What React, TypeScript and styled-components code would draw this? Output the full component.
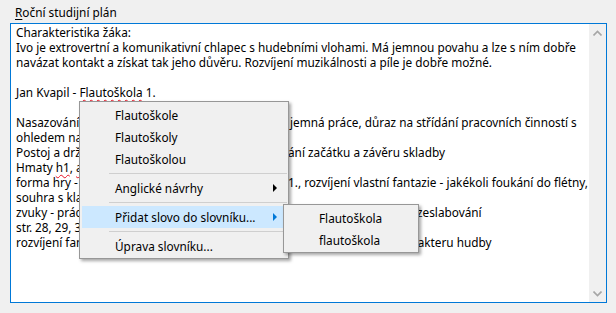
import React from "react";
import styled, { createGlobalStyle } from "styled-components";

const GlobalStyle = createGlobalStyle`
  html, body { margin: 0; padding: 0; }
  body {
    background: #f0f0f0;
    font-family: "Noto Sans", "Segoe UI", sans-serif;
    font-size: 11.8px;
    color: #000;
  }
`;

const Page = styled.div`
  position: relative;
  width: 616px;
  height: 313px;
  padding: 5px 0 0 10px;
  box-sizing: border-box;
`;

const Label = styled.div`
  line-height: 15px;
  padding-left: 5px;
  margin-bottom: 3px;
  white-space: nowrap;
`;

const AccessKey = styled.span`
  text-decoration: underline;
  text-underline-offset: 2px;
`;

const Field = styled.div`
  display: flex;
  width: 597px;
  height: 280px;
  box-sizing: border-box;
  border: 1px solid #0078d7;
  background: #fff;
`;

const Content = styled.div`
  flex: 1;
  padding: 1px 0 0 5px;
  overflow: hidden;
`;

const TextLine = styled.div`
  height: 15px;
  line-height: 15px;
  white-space: nowrap;
`;

// the part of a line that sits under the open context menu
const Occluded = styled.span<{ $w: number }>`
  display: inline-block;
  width: ${({ $w }) => $w}px;
  overflow: hidden;
  vertical-align: top;
`;

const Misspelled = styled.span`
  text-decoration: underline wavy #e81123;
  text-decoration-thickness: 1px;
  text-decoration-skip-ink: none;
  text-underline-offset: 2px;
`;

const ScrollBar = styled.div`
  width: 17px;
  background: #f0f0f0;
  display: flex;
  flex-direction: column;
  justify-content: space-between;
`;

const ScrollButton = styled.div`
  height: 17px;
  display: flex;
  align-items: center;
  justify-content: center;
`;

const Menu = styled.div<{ $left: number; $top: number; $width: number }>`
  position: absolute;
  left: ${({ $left }) => $left}px;
  top: ${({ $top }) => $top}px;
  width: ${({ $width }) => $width}px;
  box-sizing: border-box;
  padding: 2px 2px 1px;
  background: #f0f0f0;
  border: 1px solid #979797;
  box-shadow: 2px 2px 3px rgba(0, 0, 0, 0.35);
`;

const Item = styled.div<{ $active?: boolean }>`
  height: 22px;
  display: flex;
  align-items: center;
  padding-left: 33px;
  white-space: nowrap;
  background: ${({ $active }) => ($active ? "#cce8ff" : "transparent")};
`;

const SubArrow = styled.span<{ $active?: boolean }>`
  margin-left: auto;
  margin-right: 9px;
  width: 0;
  height: 0;
  border-top: 4px solid transparent;
  border-bottom: 4px solid transparent;
  border-left: 4px solid ${({ $active }) => ($active ? "#0078d7" : "#000")};
`;

const Separator = styled.div`
  height: 1px;
  margin: 3px -1px 3px 27px;
  background: #cfcfcf;
`;

const Chevron = ({ up }: { up?: boolean }) => (
  <svg width="9" height="6" viewBox="0 0 9 6">
    <path
      d={up ? "M0.5 5.5 L4.5 1.5 L8.5 5.5" : "M0.5 0.5 L4.5 4.5 L8.5 0.5"}
      fill="none"
      stroke="#a6a6a6"
      strokeWidth="1.6"
    />
  </svg>
);

export default function App() {
  return (
    <>
      <GlobalStyle />
      <Page>
        <Label>
          <AccessKey>R</AccessKey>oční studijní plán
        </Label>
        <Field>
          <Content>
            <TextLine>Charakteristika žáka:</TextLine>
            <TextLine>Ivo je extrovertní a komunikativní chlapec s hudebními vlohami. Má jemnou povahu a lze s ním dobře</TextLine>
            <TextLine>navázat kontakt a získat tak jeho důvěru. Rozvíjení muzikálnosti a píle je dobře možné.</TextLine>
            <TextLine />
            <TextLine>
              Jan Kvapil - <Misspelled>Flautoškola</Misspelled> 1.
            </TextLine>
            <TextLine />
            <TextLine>
              <Occluded $w={274}>Nasazování tónu, dýchání a vázání - </Occluded>jemná práce, důraz na střídání pracovních činností s
            </TextLine>
            <TextLine>ohledem na věk a soustředění žáka</TextLine>
            <TextLine>
              <Occluded $w={272}>Postoj a držení flétny, nácvik a zvlád</Occluded>ání začátku a závěru skladby
            </TextLine>
            <TextLine>
              Hmaty <Misspelled>h1</Misspelled>, <Misspelled>a1</Misspelled>, <Misspelled>g1</Misspelled>, <Misspelled>f1</Misspelled>
            </TextLine>
            <TextLine>
              <Occluded $w={272}>forma hry - hraní podle sluchu, kap. </Occluded>1., rozvíjení vlastní fantazie - jakékoli foukání do flétny,
            </TextLine>
            <TextLine>souhra s klavírem, hra s doprovodem</TextLine>
            <TextLine>
              <Occluded $w={401}>zvuky - práce s dynamikou, hra forte a piano, zesilování a </Occluded>zeslabování
            </TextLine>
            <TextLine>str. 28, 29, 34, 35, 36</TextLine>
            <TextLine>
              <Occluded $w={397}>rozvíjení fantazie, přednes podle nálady a cha</Occluded>rakteru hudby
            </TextLine>
          </Content>
          <ScrollBar>
            <ScrollButton>
              <Chevron up />
            </ScrollButton>
            <ScrollButton>
              <Chevron />
            </ScrollButton>
          </ScrollBar>
        </Field>

        <Menu $left={79} $top={101} $width={210}>
          <Item>Flautoškole</Item>
          <Item>Flautoškoly</Item>
          <Item>Flautoškolou</Item>
          <Separator />
          <Item>
            Anglické návrhy
            <SubArrow />
          </Item>
          <Separator />
          <Item $active>
            Přidat slovo do slovníku...
            <SubArrow $active />
          </Item>
          <Separator />
          <Item>Úprava slovníku...</Item>
        </Menu>

        <Menu $left={283} $top={204} $width={136}>
          <Item>Flautoškola</Item>
          <Item>flautoškola</Item>
        </Menu>
      </Page>
    </>
  );
}
